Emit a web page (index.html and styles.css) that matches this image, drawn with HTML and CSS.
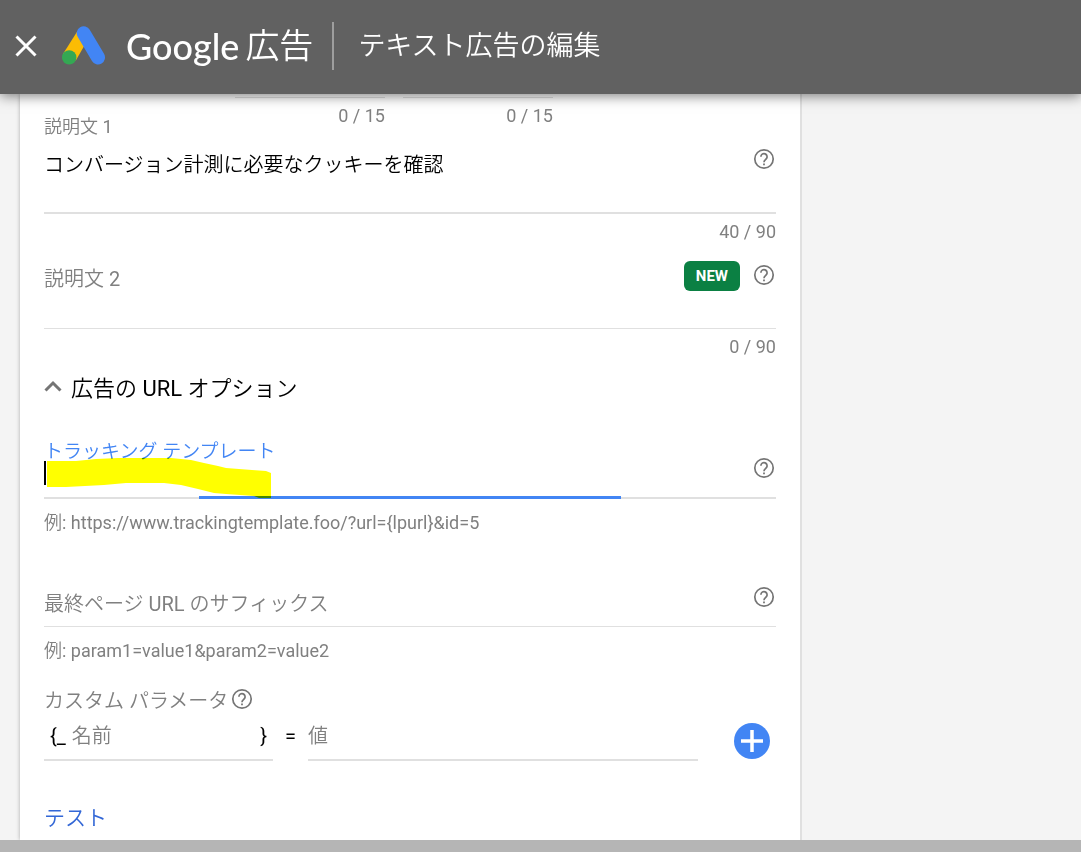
FILE: index.html
```html
<!DOCTYPE html>
<html lang="ja">
<head>
<meta charset="utf-8">
<meta name="viewport" content="width=device-width, initial-scale=1">
<title>テキスト広告の編集</title>
<link rel="stylesheet" href="styles.css">
</head>
<body>
<svg class="defs" aria-hidden="true">
  <symbol id="help" viewBox="0 0 24 24">
    <circle cx="12" cy="12" r="9.2" fill="none" stroke="currentColor" stroke-width="1.7"/>
    <path d="M8.900 9.800a3.100 3.100 0 1 1 5.300 2.100c-1.100 1.100-2.200 1.600-2.200 3.300" fill="none" stroke="currentColor" stroke-width="1.7"/>
    <path d="M11.100 16.400h1.800v1.800h-1.800z" fill="currentColor"/>
  </symbol>
</svg>
<header class="topbar">
  <button class="close" type="button" aria-label="閉じる">
    <svg viewBox="0 0 24 24" width="24" height="24"><path d="M2.500 2.500l19 19M21.500 2.500l-19 19" stroke="#fff" stroke-width="3"/></svg>
  </button>
  <svg class="logo" viewBox="0 0 44 40" width="44" height="40" aria-hidden="true">
    <path d="M15.200 5.500L1 28l12.800 6.500L25 15z" fill="#fbbc04"/>
    <path d="M21.700 7.200L36 31.400" stroke="#4285f4" stroke-width="14" stroke-linecap="round"/>
    <circle cx="7.200" cy="31.400" r="7.200" fill="#34a853"/>
  </svg>
  <div class="brand"><span class="brand-name">Google</span><span class="brand-product">広告</span></div>
  <h1 class="title">テキスト広告の編集</h1>
</header>
<main class="page">
  <form class="card">
    <div class="paths">
      <div class="path counter">0 / 15</div>
      <div class="path counter">0 / 15</div>
    </div>

    <div class="field first">
      <label class="label" for="d1">説明文 1</label>
      <div class="line thick">
        <input class="input" id="d1" type="text" value="コンバージョン計測に必要なクッキーを確認">
        <button class="help" type="button" aria-label="ヘルプ"><svg width="24" height="24"><use href="#help"/></svg></button>
      </div>
      <div class="counter">40 / 90</div>
    </div>

    <div class="field second">
      <div class="line">
        <input class="input" type="text" placeholder="説明文 2" aria-label="説明文 2">
        <span class="badge">NEW</span>
        <button class="help" type="button" aria-label="ヘルプ"><svg width="24" height="24"><use href="#help"/></svg></button>
      </div>
      <div class="counter">0 / 90</div>
    </div>

    <button class="toggle" type="button" aria-expanded="true">
      <svg viewBox="0 0 18 12" width="18" height="12"><path d="M1.500 10.500L9 3l7.500 7.500" fill="none" stroke="#757575" stroke-width="3"/></svg>
      広告の URL オプション
    </button>

    <div class="field tracking">
      <div class="tracking-line">
        <div class="tracking-main">
          <label class="tracking-label" for="tt">トラッキング テンプレート</label>
          <input class="tracking-input" id="tt" type="text">
          <span class="caret"></span>
        </div>
        <button class="help" type="button" aria-label="ヘルプ"><svg width="24" height="24"><use href="#help"/></svg></button>
        <span class="focus-line"></span>
        <svg class="marker" viewBox="0 0 226 40" width="226" height="40" aria-hidden="true"><path d="M1 3L30 3 50 1 72 0H125L145 2 158 5 172 8 180 10 206 12 220 13 225 15V40H213L208 38 180 36 168 35 152 31 135 27 118 25H80L58 27 20 29H1z" fill="#ff0"/></svg>
      </div>
      <p class="hint">例: https://www.trackingtemplate.foo/?url={lpurl}&amp;id=5</p>
    </div>

    <div class="field suffix">
      <div class="suffix-line">
        <input class="input" type="text" placeholder="最終ページ URL のサフィックス" aria-label="最終ページ URL のサフィックス">
        <button class="help" type="button" aria-label="ヘルプ"><svg width="24" height="24"><use href="#help"/></svg></button>
      </div>
      <p class="hint">例: param1=value1&amp;param2=value2</p>
    </div>

    <div class="params">
      <div class="params-head">カスタム パラメータ
        <button class="help" type="button" aria-label="ヘルプ"><svg width="24" height="24"><use href="#help"/></svg></button>
      </div>
      <div class="params-row">
        <div class="param name"><span>{_</span><input class="input" type="text" placeholder="名前" aria-label="名前"><span>}</span></div>
        <span class="equals">=</span>
        <div class="param value"><input class="input" type="text" placeholder="値" aria-label="値"></div>
        <button class="add" type="button" aria-label="追加"><svg viewBox="0 0 22 22" width="22" height="22"><path d="M11 0v22M0 11h22" stroke="#fff" stroke-width="3.500"/></svg></button>
      </div>
    </div>

    <a class="test" href="#">テスト</a>
  </form>
</main>
<div class="bottom"></div>
</body>
</html>
```
FILE: styles.css
```css
* { box-sizing: border-box; }
body {
  margin: 0;
  min-height: 100vh;
  display: flex;
  flex-direction: column;
  background: #f4f4f4;
  color: #000;
  font-family: Roboto, "Noto Sans CJK JP DemiLight", "Noto Sans CJK JP Light", "Noto Sans CJK JP", sans-serif;
  font-size: 20px;
  font-weight: 400;
}
button, input { font: inherit; color: inherit; border: 0; padding: 0; background: none; }
p { margin: 0; }
svg { display: block; }
.defs { display: none; }

.topbar {
  position: relative;
  z-index: 1;
  display: flex;
  align-items: center;
  height: 94px;
  padding: 0 14px 2px;
  background: #616161;
  color: #fff;
  box-shadow: 0 2px 12px rgba(0, 0, 0, .5);
}
.logo { margin-left: 24px; }
.brand {
  display: flex;
  align-items: center;
  gap: 6px;
  height: 48px;
  margin-left: 20px;
  padding-right: 19px;
  border-right: 2px solid #9e9e9e;
  line-height: 48px;
  white-space: nowrap;
}
.brand-name { font-family: Lato, sans-serif; font-size: 36px; font-weight: 500; }
.brand-product { font-size: 34px; font-weight: 300; }
.title { margin: 0 0 0 24px; padding-bottom: 5px; font-size: 27px; font-weight: 400; white-space: nowrap; }

.page { flex: 1; display: flex; padding-left: 20px; }
.card {
  flex: 0 1 782px;
  min-width: 0;
  padding: 3px 24px 8px;
  border-right: 2px solid #e0e0e0;
  background: #fff;
  box-shadow: 0 0 4px rgba(0, 0, 0, .3);
  clip-path: inset(0 0 0 -8px);
}
.label, .counter, .hint { font-size: 18px; line-height: 20px; color: #808080; }
.counter { padding-top: 8px; text-align: right; }
.paths { display: flex; gap: 18px; padding-left: 191px; }
.path { flex: 0 1 150px; border-top: 1px solid #e0e0e0; }

.first { margin-top: -9px; }
.second { padding-top: 11px; }
.label { display: block; }
.line {
  display: flex;
  align-items: flex-start;
  padding-bottom: 23px;
  border-bottom: 1px solid #e0e0e0;
}
.thick { border-bottom-width: 2px; }
.input { flex: 1; min-width: 0; height: 52px; outline: 0; }
.input::placeholder { color: #808080; opacity: 1; }
.help { width: 24px; height: 24px; margin: 10px 0 0 12px; color: #757575; }
.badge {
  margin-top: 8px;
  padding: 0 12px;
  border-radius: 6px;
  background: #0b8043;
  color: #fff;
  font-size: 15px;
  font-weight: 700;
  line-height: 30px;
}

.toggle {
  display: flex;
  align-items: center;
  gap: 9px;
  height: 32px;
  margin-top: 13px;
  font-size: 22px;
  white-space: nowrap;
}

.tracking { margin-top: 40px; }
.tracking-line { position: relative; display: flex; border-bottom: 2px solid #e0e0e0; }
.tracking-line .help { margin-top: 14px; }
.tracking-main { position: relative; flex: 1; padding-bottom: 12px; }
.tracking-label { display: block; font-size: 19px; line-height: 19px; color: #4285f4; }
.tracking-input { display: block; width: 100%; height: 24px; outline: 0; }
.caret { position: absolute; left: 0; bottom: 12px; width: 2px; height: 24px; background: #000; }
.focus-line { position: absolute; left: 155px; bottom: -2px; width: 422px; height: 3px; background: #4285f4; }
.marker { position: absolute; left: 2px; bottom: -1px; mix-blend-mode: multiply; }
.hint { margin-top: 14px; }

.suffix { margin-top: 52px; }
.suffix-line { display: flex; align-items: flex-start; padding-bottom: 7px; border-bottom: 1px solid #e0e0e0; }
.suffix-line .input { height: 30px; margin-top: 4px; }
.suffix-line .help { margin-top: 0; }

.params { margin-top: 24px; }
.params-head { display: flex; align-items: center; gap: 2px; height: 28px; color: #808080; }
.params-head .help { margin: 0; }
.params-row { display: flex; align-items: flex-start; }
.param { display: flex; align-items: center; gap: 6px; border-bottom: 2px solid #e0e0e0; }
.param .input { height: 46px; }
.name { flex: 217; min-width: 0; padding: 0 6px; }
.value { flex: 390; min-width: 0; }
.equals { width: 35px; line-height: 46px; text-align: center; }
.add {
  display: flex;
  align-items: center;
  justify-content: center;
  width: 36px;
  height: 36px;
  margin: 10px 6px 0 36px;
  border-radius: 50%;
  background: #4285f4;
}
.test { display: inline-block; margin-top: 43px; line-height: 28px; font-size: 21px; color: #3367d6; text-decoration: none; }
.bottom { height: 12px; background: #b5b5b5; }
```
